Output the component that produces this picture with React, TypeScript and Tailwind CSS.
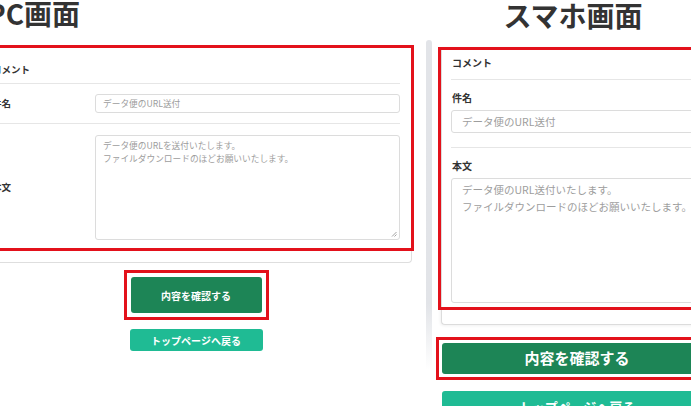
const RED = "border-[#e3111b]";

function Grip() {
  return (
    <svg
      className="absolute bottom-[2px] right-[2px]"
      width="6"
      height="6"
      viewBox="0 0 6 6"
    >
      <path d="M1 5.5 L5.5 1 M3.5 5.5 L5.5 3.5" stroke="#8a8a8a" strokeWidth="0.8" />
    </svg>
  );
}

function PcPanel() {
  return (
    <div className="w-[425px] shrink-0 overflow-hidden">
      <div className="-ml-[22px] w-[436px]">
        <h1 className="h-[45px] pl-[9px] text-[28px] font-bold leading-[27px] text-[#333]">
          PC画面
        </h1>

        <div className="w-[434px] rounded-b border-b border-r border-[#dedede] bg-white pb-[11px]">
          <div className={`w-[436px] border-[3px] ${RED} px-[11px] pb-[8px]`}>
            <div className="border-b border-[#e6e6e6] pb-[7px] pt-[15px] text-[9.5px] font-bold leading-[13px] text-[#333]">
              コメント
            </div>
            <div className="flex items-center border-b border-[#e6e6e6] py-[10px]">
              <div className="w-[103px] text-[9.5px] font-bold text-[#333]">件名</div>
              <div className="flex h-[19px] flex-1 items-center rounded-[3px] border border-[#dcdcdc] px-[7px] text-[8.7px] text-[#9d9d9d]">
                データ便のURL送付
              </div>
            </div>
            <div className="flex items-center pt-[11px]">
              <div className="w-[103px] text-[9.5px] font-bold text-[#333]">本文</div>
              <div className="relative h-[105px] flex-1 rounded-[3px] border border-[#dcdcdc] px-[7px] pt-[3px] text-[8.7px] leading-[13px] text-[#9d9d9d]">
                <p>データ便のURLを送付いたします。</p>
                <p>ファイルダウンロードのほどお願いいたします。</p>
                <Grip />
              </div>
            </div>
          </div>
        </div>

        <div className={`mx-auto mt-[7px] w-[145px] border-[3px] ${RED} p-[4px]`}>
          <div className="flex h-[36px] items-center justify-center rounded-[3px] bg-[#1d8556] text-[10px] font-bold text-white">
            内容を確認する
          </div>
        </div>
        <div className="mx-auto mt-[9px] flex h-[22px] w-[133px] items-center justify-center rounded-[3px] bg-[#1fbb94] text-[10px] font-bold text-white">
          トップページへ戻る
        </div>
      </div>
    </div>
  );
}

function PhonePanel() {
  return (
    <div className="w-[282px] shrink-0">
      <h1 className="h-[47px] pt-[2px] text-center text-[28px] font-bold leading-[27px] text-[#333]">
        スマホ画面
      </h1>

      <div className="ml-[9px] w-[271px] rounded-b border-b border-l border-[#dcdcdc] bg-white pb-[14px] shadow-[-1px_1px_3px_rgba(0,0,0,0.06)]">
        <div className={`-ml-[4px] w-[275px] border-[3px] ${RED} px-[10px] pb-[4px]`}>
          <div className="border-b border-[#e6e6e6] pb-[10px] pl-[1px] pt-[6px] text-[10px] font-bold leading-[13px] text-[#333]">
            コメント
          </div>
          <div className="border-b border-[#e6e6e6] pb-[14px] pt-[11px]">
            <div className="pl-[1px] text-[10px] font-bold leading-[13px] text-[#333]">件名</div>
            <div className="mt-[6px] flex h-[23px] items-center rounded-[3px] border border-[#dcdcdc] px-[10px] text-[10.5px] text-[#9d9d9d]">
              データ便のURL送付
            </div>
          </div>
          <div className="pt-[11px]">
            <div className="pl-[1px] text-[10px] font-bold leading-[13px] text-[#333]">本文</div>
            <div className="mt-[6px] h-[125px] rounded-[3px] border border-[#dcdcdc] px-[10px] pt-[2px] text-[10.5px] leading-[17px] text-[#9d9d9d]">
              <p>データ便のURL送付いたします。</p>
              <p className="whitespace-nowrap">ファイルダウンロードのほどお願いいたします。</p>
            </div>
          </div>
        </div>
      </div>

      <div className={`ml-[4px] mt-[12px] w-[282px] border-[3px] ${RED} p-[3px]`}>
        <div className="flex h-[31px] items-center justify-center rounded-[3px] bg-[#1d8556] text-[15px] font-bold text-white">
          内容を確認する
        </div>
      </div>
      <div className="ml-[10px] mt-[11px] flex h-[31px] w-[270px] items-center justify-center rounded-[3px] bg-[#1fbb94] text-[13px] font-bold text-white">
        トップページへ戻る
      </div>
    </div>
  );
}

export default function App() {
  return (
    <div className="flex h-[406px] w-[691px] overflow-hidden bg-white font-['Noto_Sans_CJK_JP','Noto_Sans',sans-serif]">
      <PcPanel />
      <div className="ml-[1px] mt-[40px] h-[330px] w-[6px] shrink-0 rounded-t bg-linear-to-b from-[#e2e4e8] from-80% to-white" />
      <PhonePanel />
    </div>
  );
}
